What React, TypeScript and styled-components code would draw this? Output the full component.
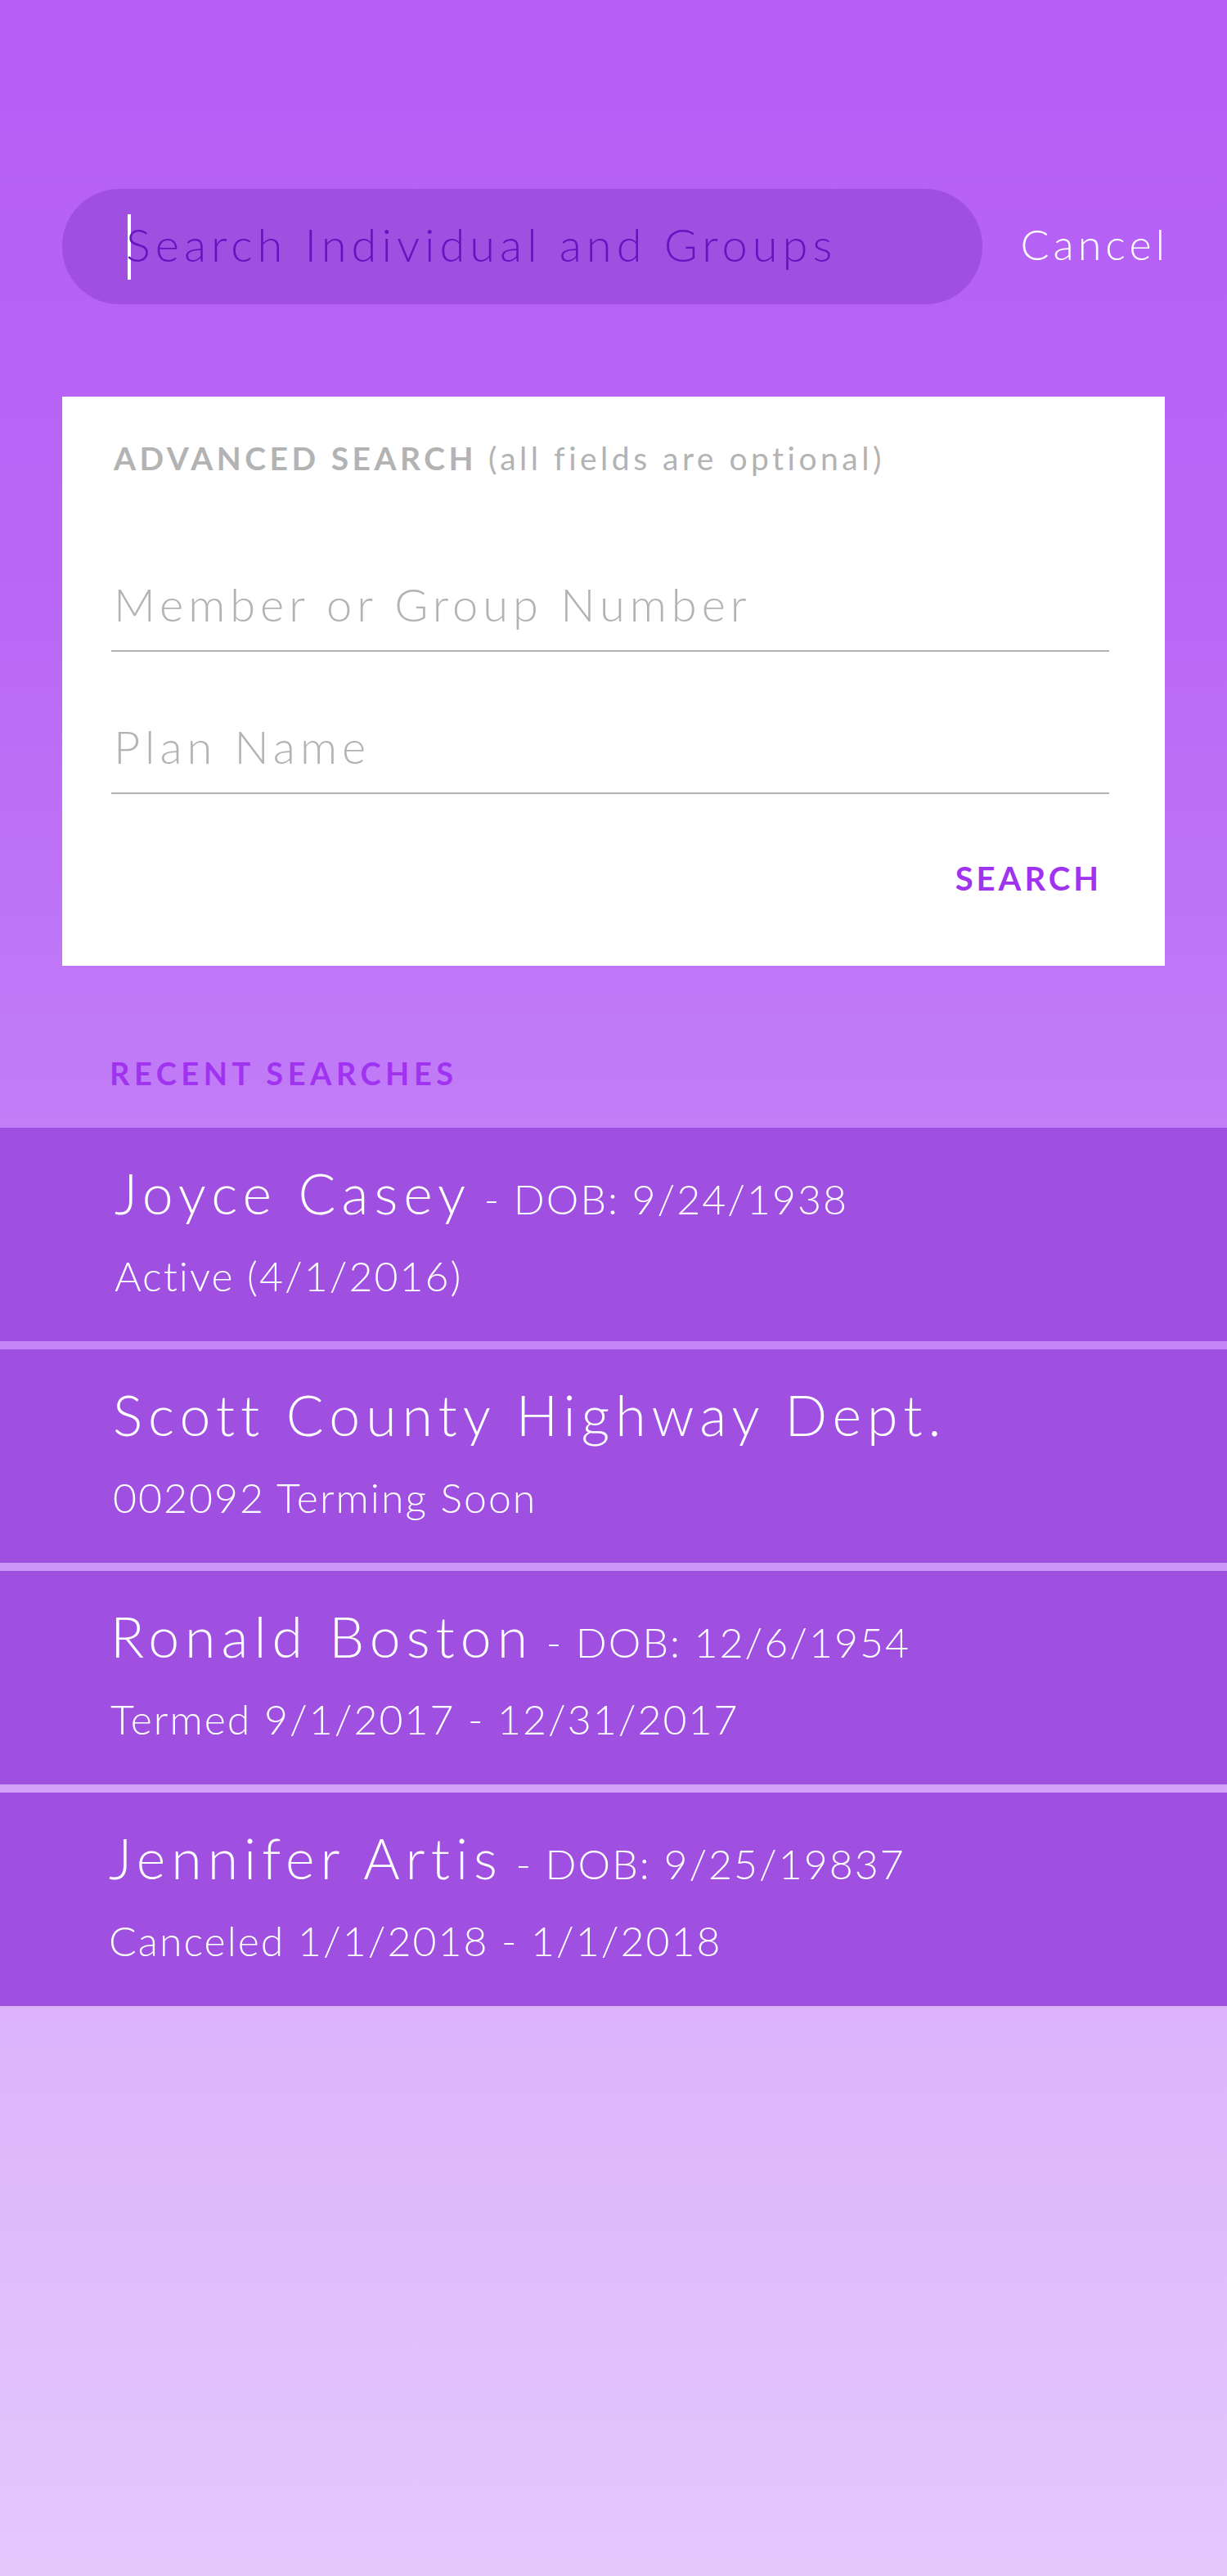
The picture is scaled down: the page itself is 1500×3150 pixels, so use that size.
import React from 'react';
import styled, { createGlobalStyle } from 'styled-components';

const GlobalStyle = createGlobalStyle`
   html, body {
      margin: 0;
      padding: 0;
   }
   body {
      font-family: Lato, 'Open Sans', 'Liberation Sans', sans-serif;
      -webkit-font-smoothing: antialiased;
   }
`;

const Page = styled.div`
   min-height: 3150px;
   background: linear-gradient(
      180deg,
      #b55ef6 0px,
      #b966f6 700px,
      #c079f7 1260px,
      #c686f8 1650px,
      #d3a2fa 2180px,
      #dcb3fb 2460px,
      #e4c8fc 3150px
   );
   padding-top: 231px;
   box-sizing: border-box;
`;

const TopBar = styled.div`
   display: flex;
   align-items: center;
   padding: 0 76px;
`;

const SearchPill = styled.div`
   display: flex;
   align-items: center;
   width: 1125px;
   height: 141px;
   border-radius: 70px;
   background: #a050e0;
   padding: 0 0 6px 80px;
   box-sizing: border-box;
`;

const Caret = styled.span`
   width: 4px;
   height: 80px;
   margin-top: 6px;
   background: #ffffff;
   margin-right: -6px;
`;

const SearchText = styled.span`
   font-size: 56px;
   font-weight: 300;
   letter-spacing: 6px;
   color: #6a12c2;
`;

const CancelLink = styled.span`
   margin: 0 -5px 8px auto;
   font-size: 52px;
   font-weight: 300;
   letter-spacing: 5px;
   color: #ffffff;
`;

const Card = styled.div`
   margin: 113px 76px 0;
   height: 696px;
   background: #ffffff;
   padding: 52px 68px 0 60px;
   box-sizing: border-box;
   display: flex;
   flex-direction: column;
`;

const CardTitle = styled.div`
   font-size: 39px;
   letter-spacing: 4.5px;
   color: #b3b3b3;
   font-weight: 700;
   padding-left: 3px;

   span {
      font-weight: 400;
   }
`;

const Field = styled.div<{ $top: number }>`
   margin-top: ${(p) => p.$top}px;
   padding: 0 0 28px 3px;
   border-bottom: 2px solid #b3b3b3;
   font-size: 56px;
   font-weight: 300;
   letter-spacing: 6px;
   color: #b3b3b3;
   line-height: 1;
`;

const Actions = styled.div`
   display: flex;
   justify-content: flex-end;
   padding-right: 9px;
   margin-top: 79px;
`;

const SearchButton = styled.span`
   font-size: 40px;
   font-weight: 700;
   letter-spacing: 4px;
   color: #a033f0;
`;

const SectionLabel = styled.div`
   padding: 108px 0 0 134px;
   height: 198px;
   box-sizing: border-box;
   font-size: 38px;
   font-weight: 700;
   letter-spacing: 5.5px;
   color: #a033f0;
`;

const List = styled.div`
   display: flex;
   flex-direction: column;
   gap: 10px;
`;

const Row = styled.div<{ $indent: number }>`
   height: 261px;
   background: #a050e0;
   padding: 46px 0 0 ${(p) => p.$indent}px;
   box-sizing: border-box;
   color: #ffffff;
   font-weight: 300;
`;

const Name = styled.div`
   font-size: 68px;
   letter-spacing: 7px;
   line-height: 1;

   small {
      font-size: 50px;
      letter-spacing: 2px;
   }
`;

const Status = styled.div`
   margin-top: 42px;
   font-size: 50px;
   letter-spacing: 2px;
   line-height: 1;
`;

const recent = [
   { name: 'Joyce Casey', dob: '9/24/1938', status: 'Active (4/1/2016)', indent: 140 },
   { name: 'Scott County Highway Dept.', status: '002092 Terming Soon', indent: 138 },
   { name: 'Ronald Boston', dob: '12/6/1954', status: 'Termed 9/1/2017 - 12/31/2017', indent: 135 },
   { name: 'Jennifer Artis', dob: '9/25/19837', status: 'Canceled 1/1/2018 - 1/1/2018', indent: 133 },
];

const App = (): JSX.Element => {
   return (
      <Page>
         <GlobalStyle />
         <TopBar>
            <SearchPill>
               <Caret />
               <SearchText>Search Individual and Groups</SearchText>
            </SearchPill>
            <CancelLink>Cancel</CancelLink>
         </TopBar>
         <Card>
            <CardTitle>
               ADVANCED SEARCH <span>(all fields are optional)</span>
            </CardTitle>
            <Field $top={128}>Member or Group Number</Field>
            <Field $top={88}>Plan Name</Field>
            <Actions>
               <SearchButton>SEARCH</SearchButton>
            </Actions>
         </Card>
         <SectionLabel>RECENT SEARCHES</SectionLabel>
         <List>
            {recent.map((r) => (
               <Row key={r.name} $indent={r.indent}>
                  <Name>
                     {r.name}
                     {r.dob && <small> - DOB: {r.dob}</small>}
                  </Name>
                  <Status>{r.status}</Status>
               </Row>
            ))}
         </List>
      </Page>
   );
};

export default App;
